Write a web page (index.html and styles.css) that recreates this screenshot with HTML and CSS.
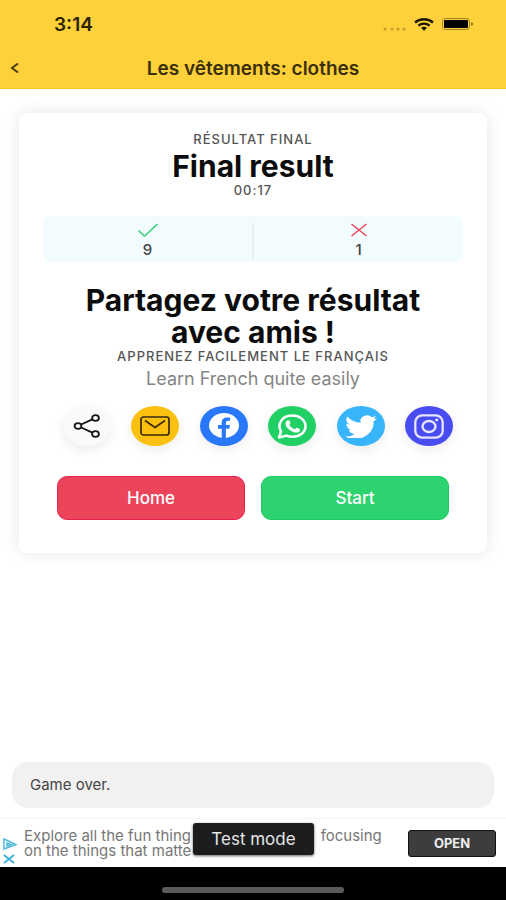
FILE: index.html
```html
<!DOCTYPE html>
<html lang="fr">
<head>
    <meta charset="UTF-8">
    <meta name="viewport" content="width=device-width, initial-scale=1.0">
    <title>Les vêtements: clothes</title>
    <link rel="stylesheet" href="styles.css">
</head>
<body>

<header class="header">
    <div class="status-bar">
        <span class="time">3:14</span>
        <div class="status-icons">
            <svg width="24" height="4" viewBox="0 0 24 4" fill="#c39d2b">
                <circle cx="3" cy="2" r="1.5"/><circle cx="10" cy="2" r="1.5"/><circle cx="16" cy="2" r="1.5"/><circle cx="22" cy="2" r="1.5"/>
            </svg>
            <svg width="20" height="13" viewBox="0 0 20 13" fill="none" stroke="#1c1702" stroke-width="2.4">
                <path d="M1 4.5C6 0.2 14 0.2 19 4.5"/>
                <path d="M4.4 7.6c3.2-2.7 8-2.7 11.2 0"/>
                <path d="M7 9.8c1.7-1.4 4.3-1.4 6 0L10 12.8z" fill="#1c1702" stroke="none"/>
            </svg>
            <svg width="32" height="12" viewBox="0 0 32 12">
                <rect x="0.5" y="0.5" width="27" height="11" rx="3" fill="none" stroke="#9b7d22"/>
                <rect x="2" y="2" width="24" height="8" rx="1" fill="#000"/>
                <path d="M29 4c3 1 3 3 0 4z" fill="#9b7d22"/>
            </svg>
        </div>
    </div>
    <div class="nav-bar">
        <button class="back" aria-label="Retour">
            <svg width="10" height="12" viewBox="0 0 10 12" fill="none" stroke="#4a3c0c" stroke-width="2"><path d="M8 1.5L2 6l6 4.5"/></svg>
        </button>
        <h1>Les vêtements: clothes</h1>
    </div>
</header>

<main class="content">
    <section class="card">
        <p class="overline">RÉSULTAT FINAL</p>
        <h2 class="result-title">Final result</h2>
        <p class="duration">00:17</p>

        <div class="score">
            <div class="score-item">
                <svg width="20" height="14" viewBox="0 0 20 14" fill="none" stroke="#43d080" stroke-width="1.6"><path d="M0.5 7.5L6.5 13 19.5 1"/></svg>
                <span>9</span>
            </div>
            <div class="score-item">
                <svg width="16" height="14" viewBox="0 0 16 14" fill="none" stroke="#ea4a5c" stroke-width="1.6"><path d="M0.5 1l15 12M15.5 1l-15 12"/></svg>
                <span>1</span>
            </div>
        </div>

        <h2>Partagez votre résultat avec amis !</h2>
        <p class="overline">APPRENEZ FACILEMENT LE FRANÇAIS</p>
        <p class="subtitle">Learn French quite easily</p>

        <div class="share">
            <button class="share-btn plain" aria-label="Partager">
                <svg width="28" height="24" viewBox="0 0 28 24" fill="none" stroke="#151515" stroke-width="1.8">
                    <ellipse cx="5" cy="12" rx="3.4" ry="2.8"/><ellipse cx="22.5" cy="4" rx="3.4" ry="2.8"/><ellipse cx="22.5" cy="20" rx="3.4" ry="2.8"/>
                    <path d="M8.2 10.5L19.3 5.4M8.2 13.5l11.1 5.1"/>
                </svg>
            </button>
            <button class="share-btn mail" aria-label="E-mail">
                <svg width="30" height="20" viewBox="0 0 30 20" fill="none" stroke="#362b02" stroke-width="1.7">
                    <rect x="1" y="1" width="28" height="18" rx="2.5"/><path d="M5 4.5l10 7 10-7"/>
                </svg>
            </button>
            <button class="share-btn facebook" aria-label="Facebook">
                <svg width="30" height="26" viewBox="0 0 30 26">
                    <ellipse cx="15" cy="12.5" rx="15" ry="12.5" fill="#fff"/>
                    <path d="M12.7 26V15.8H9v-3.7h3.7V9.5c0-3.3 2.3-5 5.7-5 1.4 0 2.7.2 2.7.2v3h-1.8c-1.9 0-2.4 1-2.4 2v2.4h4.1l-.7 3.7h-3.4V26z" fill="#2a78fa"/>
                </svg>
            </button>
            <button class="share-btn whatsapp" aria-label="WhatsApp">
                <svg width="30" height="25" viewBox="0 0 30 25">
                    <path d="M2 23.5l2-6C.3 11.5 3.5 1.5 15.5 1.5c7.3 0 13 4.7 13 10.7s-5.7 10.6-13 10.6c-2.2 0-4.3-.4-6.2-1.2z" fill="none" stroke="#fff" stroke-width="2.5" stroke-linejoin="round"/>
                    <path d="M10.2 6.5c.6-.5 1.7-.5 2.1.1l1.2 2.5c.2.6-1.3 1.6-1.1 2 1.1 2 3 3.3 5.3 4.1.7.1 1.5-1.7 2.2-1.4l2.9 1.3c.8.5.2 2-.6 2.6-1.6 1.2-3.8 1-6 .2-3.5-1.3-6-3.5-7.3-6.2-.8-1.9-.3-4.1 1.3-5.2z" fill="#fff"/>
                </svg>
            </button>
            <button class="share-btn twitter" aria-label="Twitter">
                <svg width="32" height="23" viewBox="0 0 24 19" preserveAspectRatio="none" fill="#fff">
                    <path d="M24 2.6a10 10 0 0 1-2.8.8A5 5 0 0 0 23.3.7a10 10 0 0 1-3.1 1.2 4.9 4.9 0 0 0-8.4 4.5A14 14 0 0 1 1.7 1.2a4.9 4.9 0 0 0 1.5 6.6A4.9 4.9 0 0 1 1 7.2a4.9 4.9 0 0 0 3.9 4.9 5 5 0 0 1-2.2.1 4.9 4.9 0 0 0 4.6 3.4A9.9 9.9 0 0 1 0 17.6 14 14 0 0 0 21.5 5.2 10 10 0 0 0 24 2.6z"/>
                </svg>
            </button>
            <button class="share-btn instagram" aria-label="Instagram">
                <svg width="30" height="25" viewBox="0 0 30 25" fill="none" stroke="#e6e5ff" stroke-width="2.3">
                    <rect x="1.3" y="1.3" width="27.4" height="22.4" rx="7"/>
                    <ellipse cx="15" cy="12.5" rx="6.5" ry="5.5"/>
                    <ellipse cx="22.8" cy="6" rx="1.6" ry="1.4" fill="#e6e5ff" stroke="none"/>
                </svg>
            </button>
        </div>

        <div class="actions">
            <button class="btn home">Home</button>
            <button class="btn start">Start</button>
        </div>
    </section>

    <p class="message">Game over.</p>
</main>

<aside class="ad">
    <div class="ad-marks">
        <svg width="14" height="12" viewBox="0 0 14 12" fill="none" stroke="#4bb8d8" stroke-width="1.5"><path d="M1 1l12 5.5L1 11z"/><path d="M4 5v3l4-1.5z"/></svg>
        <svg width="12" height="10" viewBox="0 0 12 10" fill="none" stroke="#35afd5" stroke-width="1.7"><path d="M1 1l10 8M11 1L1 9"/></svg>
    </div>
    <p class="ad-text">Explore all the fun thing<br>on the things that matte</p>
    <span class="test-mode">Test mode</span>
    <p class="ad-text">focusing</p>
    <button class="ad-open">OPEN</button>
</aside>

<footer class="home-bar"><div class="home-indicator"></div></footer>

</body>
</html>
```
FILE: styles.css
```css
* {
    box-sizing: border-box;
}

body {
    font-family: Inter, "Liberation Sans", sans-serif;
    background-color: #fff;
    color: #0c0c0c;
    display: flex;
    flex-direction: column;
    min-height: 100vh;
    margin: 0;
}

h1, h2, p {
    margin: 0;
}

button {
    font-family: inherit;
    border: none;
    padding: 0;
    cursor: pointer;
}

svg {
    display: block;
}

.header {
    background-color: #fed03a;
    border-bottom: 1px solid #fbc91c;
}

.status-bar {
    display: flex;
    align-items: center;
    justify-content: space-between;
    height: 48px;
    padding: 0 32px 0 54px;
}

.time {
    font-size: 19px;
    font-weight: 600;
    color: #2a2205;
}

.status-icons {
    display: flex;
    align-items: center;
    gap: 8px;
}

.status-icons svg:first-child {
    align-self: flex-end;
}

.nav-bar {
    display: grid;
    grid-template-columns: 30px 1fr 30px;
    align-items: center;
    height: 40px;
}

.nav-bar h1 {
    font-size: 19px;
    font-weight: 600;
    text-align: center;
    color: #3a2f08;
}

.back {
    display: flex;
    align-items: center;
    justify-content: center;
    height: 40px;
    background: none;
}

.content {
    display: flex;
    flex-direction: column;
    flex: 1;
    justify-content: space-between;
    padding: 24px 12px 10px;
}

.card {
    margin: 0 7px;
    padding: 18px 24px 33px;
    border-radius: 8px;
    box-shadow: 0 0 16px rgba(0, 0, 0, 0.1);
    text-align: center;
}

.card h2 {
    padding: 0 30px;
    font-size: 30px;
    line-height: 32px;
    font-weight: 700;
}

.card .result-title {
    padding-top: 3px;
}

.overline {
    font-size: 13px;
    line-height: 16px;
    font-weight: 500;
    letter-spacing: 1px;
    color: #555;
}

.duration {
    font-size: 13px;
    line-height: 16px;
    font-weight: 500;
    letter-spacing: 1px;
    color: #555;
}

.score {
    display: flex;
    margin: 18px 0 22px;
    padding: 7px 0 3px;
    border-radius: 8px;
    background-color: #f2fbfd;
}

.score-item {
    display: flex;
    flex: 1;
    flex-direction: column;
    align-items: center;
    gap: 4px;
    font-size: 15px;
    line-height: 18px;
    font-weight: 500;
    color: #444;
}

.score-item + .score-item {
    border-left: 2px solid #e8f0f2;
}

.subtitle {
    margin-top: 4px;
    font-size: 18px;
    line-height: 22px;
    color: #858585;
}

.share {
    display: flex;
    justify-content: space-between;
    margin-top: 16px;
    padding: 0 10px 0 20px;
}

.share-btn {
    display: flex;
    align-items: center;
    justify-content: center;
    width: 48px;
    height: 40px;
    border-radius: 50%;
    box-shadow: 0 4px 12px rgba(0, 0, 0, 0.08);
}

.plain {
    background-color: #f8fafb;
}

.mail {
    background-color: #fbc010;
}

.facebook {
    background-color: #2a78fa;
}

.whatsapp {
    background-color: #20d065;
}

.twitter {
    background-color: #38b5fa;
}

.instagram {
    background-color: #494cf0;
}

.actions {
    display: flex;
    gap: 16px;
    margin-top: 30px;
    padding: 0 14px;
}

.btn {
    flex: 1;
    height: 44px;
    border-radius: 10px;
    font-size: 17px;
    font-weight: 500;
    color: #fff;
}

.home {
    background-color: #ec445b;
    border: 1px solid #e32450;
}

.start {
    background-color: #2dd36f;
    border: 1px solid #1bcb62;
}

.message {
    padding: 12px 18px;
    border-radius: 16px;
    background-color: #f1f1f1;
    font-size: 15px;
    line-height: 22px;
    color: #444;
}

.ad {
    display: flex;
    align-items: flex-start;
    height: 49px;
    padding: 0 10px 0 3px;
    border-top: 1px solid #f4f4f4;
}

.ad-marks {
    align-self: flex-end;
    display: flex;
    flex-direction: column;
    gap: 4px;
    padding-bottom: 3px;
}

.ad-text {
    padding: 9px 0 0 7px;
    font-size: 15px;
    line-height: 15px;
    white-space: nowrap;
    color: #777;
}

.ad-open {
    align-self: center;
    width: 88px;
    height: 27px;
    margin-left: auto;
    border: 1px solid #111;
    border-radius: 3px;
    background-color: #3d3d3d;
    font-size: 13px;
    font-weight: 700;
    color: #eee;
}

.test-mode {
    margin: 4px 0 0 2px;
    padding: 6px 18px;
    border-radius: 3px;
    background-color: #1b1d1f;
    box-shadow: 0 1px 3px rgba(0, 0, 0, 0.6);
    font-size: 17px;
    line-height: 20px;
    white-space: nowrap;
    color: #e6e6e6;
}

.home-bar {
    display: flex;
    justify-content: center;
    height: 33px;
    padding-top: 20px;
    background-color: #000;
}

.home-indicator {
    width: 36%;
    height: 6px;
    border-radius: 3px;
    background-color: #5a5a5a;
}
```
